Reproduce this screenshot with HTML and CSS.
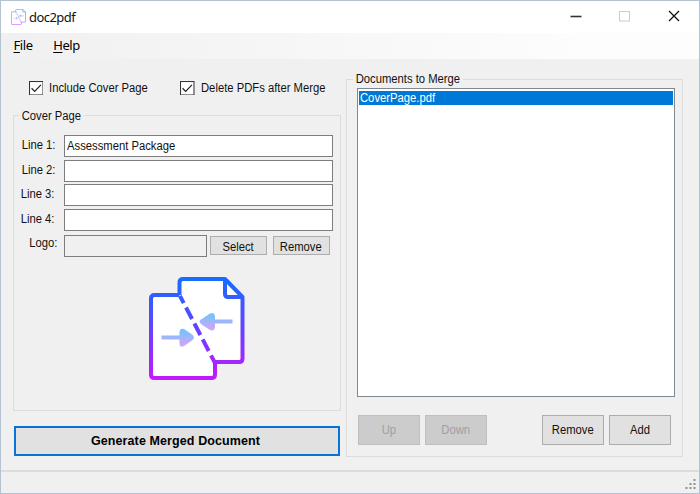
FILE: index.html
```
<!DOCTYPE html>
<html lang="en">
<head>
<meta charset="utf-8">
<title>doc2pdf</title>
<link rel="stylesheet" href="styles.css">
</head>
<body>
<div class="window">
  <header class="titlebar">
    <svg class="app-icon" viewBox="0 0 96 104">
      <use href="#pages"/>
    </svg>
    <span class="title">doc2pdf</span>
    <svg class="controls" width="110" height="14" viewBox="0 0 110 14">
      <path d="M0.5 6.500H11.500" stroke="#333" stroke-width="1.6"/>
      <rect x="49.500" y="1.500" width="10" height="9.500" fill="none" stroke="#ccc"/>
      <path d="M99 1L109 11M109 1L99 11" stroke="#111" stroke-width="1.3"/>
    </svg>
  </header>
  <nav class="menu"><span class="file"><u>F</u>ile</span><span class="help"><u>H</u>elp</span></nav>
  <main class="main">
    <section class="left">
      <div class="checks">
        <label class="check"><svg viewBox="0 0 14 14"><rect x=".5" y=".5" width="13" height="13" fill="#fff" stroke="#333"/><path d="M2.500 7L5.500 10L11.500 3.800" fill="none" stroke="#222" stroke-width="1.2"/></svg><span class="narrow">Include Cover Page</span></label>
        <label class="check"><svg viewBox="0 0 14 14"><rect x=".5" y=".5" width="13" height="13" fill="#fff" stroke="#333"/><path d="M2.500 7L5.500 10L11.500 3.800" fill="none" stroke="#222" stroke-width="1.2"/></svg><span class="narrow">Delete PDFs after Merge</span></label>
      </div>
      <div class="group cover">
        <div class="legend narrow">Cover Page</div>
        <div class="row"><span class="label narrow">Line 1:</span><div class="input"><span class="narrow">Assessment Package</span></div></div>
        <div class="row"><span class="label narrow">Line 2:</span><div class="input"></div></div>
        <div class="row"><span class="label l3 narrow">Line 3:</span><div class="input"></div></div>
        <div class="row"><span class="label l3 narrow">Line 4:</span><div class="input"></div></div>
        <div class="row logo-row"><span class="label logo narrow">Logo:</span><div class="input readonly"></div><div class="btn small"><span class="narrow">Select</span></div><div class="btn small second"><span class="narrow">Remove</span></div></div>
        <svg class="picture" width="96" height="104" viewBox="0 0 96 104">
          <defs>
            <linearGradient id="edge" gradientUnits="userSpaceOnUse" x1="0" y1="0" x2="0" y2="104"><stop offset="0" stop-color="#146eff"/><stop offset=".5" stop-color="#6541ff"/><stop offset="1" stop-color="#c817ff"/></linearGradient>
            <linearGradient id="a1" gradientUnits="userSpaceOnUse" x1="0" y1="37" x2="0" y2="54"><stop offset="0" stop-color="#70c5ff"/><stop offset="1" stop-color="#dba2f5"/></linearGradient>
            <linearGradient id="a2" gradientUnits="userSpaceOnUse" x1="0" y1="53" x2="0" y2="70"><stop offset="0" stop-color="#70c5ff"/><stop offset="1" stop-color="#dba2f5"/></linearGradient>
            <g id="pages">
              <path d="M30 19V5Q30 2 33 2H76L94 20V82Q94 85 91 85H66V98Q66 101 63 101H5Q2 101 2 98V21Q2 18 5 18H30Z" fill="#fff"/>
              <path d="M30.500 18V5.500Q30.500 2 34 2H76L93.500 20V81.500Q93.500 85 90 85H66V97.500Q66 101 62.500 101H5.500Q2 101 2 97.500V21.500Q2 18 5.500 18H30.500M76 3V17Q76 20 79 20H93" fill="none" stroke="url(#edge)" stroke-width="4" stroke-linejoin="round"/>
              <path d="M31 19L66 86" fill="none" stroke="url(#edge)" stroke-width="4" stroke-dasharray="13 5" stroke-dashoffset="5"/>
              <path d="M65 42.500H83.500V46.500H66V50Q65 55 61 53L52 47Q49 44.500 52 42.500L61 36.500Q65 34.500 66 39V42.500Z" fill="url(#a1)"/>
              <path d="M12.500 58.500H30.500V55Q31 50.500 35 52L43 57.500Q47 60.500 43 63.500L35 69Q31 71.500 30.500 66.500V62.500H12.500Z" fill="url(#a2)"/>
            </g>
          </defs>
          <use href="#pages"/>
        </svg>
      </div>
      <div class="generate"><span>Generate Merged Document</span></div>
    </section>
    <section class="group docs">
      <div class="legend narrow">Documents to Merge</div>
      <div class="list"><div class="item"><span class="narrow">CoverPage.pdf</span></div></div>
      <div class="actions">
        <div class="btn off"><span class="narrow">Up</span></div><div class="btn off"><span class="narrow">Down</span></div><div class="btn push"><span class="narrow">Remove</span></div><div class="btn"><span class="narrow">Add</span></div>
      </div>
    </section>
  </main>
  <footer class="status">
    <svg width="12" height="12" viewBox="0 0 12 12" fill="#909090"><path d="M8.500 0h2v2h-2zM4.500 4h2v2h-2zM8.500 4h2v2h-2zM.5 8h2v2h-2zM4.500 8h2v2h-2zM8.500 8h2v2h-2z"/></svg>
  </footer>
</div>
</body>
</html>
```
FILE: styles.css
```
* { box-sizing: border-box; }
body { margin: 0; font: 12.5px/16px "Liberation Sans", Arial, sans-serif; color: #111; }
.narrow { display: inline-block; transform: scaleX(.9); transform-origin: left; white-space: nowrap; }
.window { width: 700px; height: 494px; border: 1px solid #b4c3d1; background: #f0f0f0; display: flex; flex-direction: column; }
.titlebar { height: 32px; background: #fff; display: flex; align-items: center; padding: 0 19px 0 9.5px; }
.app-icon { width: 15px; height: 16px; opacity: .75; }
.title { font: 13px/16px "Noto Sans", sans-serif; margin-left: 3.5px; letter-spacing: -0.55px; }
.controls { margin-left: auto; }
.menu { height: 26px; background: linear-gradient(90deg, #f0f0f0, #fdfdfd 85%); padding: 3px 0 0 12.5px; display: flex; font: 13px/18px "Noto Sans", sans-serif; letter-spacing: -0.4px; color: #000; }
.menu u { text-underline-offset: 2px; }
.help { margin-left: 20.5px; }
.main { height: 411px; display: flex; gap: 5px; padding: 0 0 0 12px; }
.left { width: 328px; display: flex; flex-direction: column; }
.checks { height: 56px; display: flex; padding: 21px 0 0 15.5px; }
.check { display: flex; height: 16px; width: 151.5px; align-items: center; flex: none; white-space: nowrap; }
.check svg { width: 14.5px; height: 14.5px; margin-right: 6px; flex: none; }
.group { position: relative; border: 1px solid #dcdcdc; }
.legend { position: absolute; top: -8px; left: 5px; padding: 0 3px; background: #f0f0f0; }
.docs .legend { top: -9px; left: 6px; }
.cover { height: 296px; padding-top: 19px; }
.row { display: flex; height: 24.6px; }
.label { width: 41.5px; margin-right: 8.5px; text-align: right; padding-top: 2px; transform-origin: right; }
.label.l3 { width: 40.5px; margin-right: 9.5px; }
.label.logo { width: 43.5px; margin-right: 6.5px; padding-top: 0; }
.input { width: 268.5px; height: 22px; border: 1px solid #7d7d7d; background: #fff; padding: 2px 2px; }
.input.readonly { width: 143px; background: #f0f0f0; }
.logo-row { height: 25px; padding-top: 1.4px; }
.btn { width: 62px; height: 30px; border: 1px solid #adadad; background: #e1e1e1; display: flex; align-items: center; justify-content: center; }
.btn .narrow { transform-origin: 40% 50%; }
.btn.small { width: 57px; height: 19px; margin: 1px 0 0 3px; padding-top: 3px; }
.btn.small.second { margin-left: 6px; }
.picture { display: block; margin: 19px 0 0 134.5px; }
.generate { height: 30px; width: 326px; margin: 15px 0 0 1px; padding-right: 3px; border: 2px solid #0873d5; background: #e1e1e1; display: flex; align-items: center; justify-content: center; font-weight: bold; color: #000; letter-spacing: 0.1px; }
.docs { width: 337px; height: 378px; margin-top: 20px; padding: 8px 8px 0 10px; }
.list { width: 318px; height: 309px; border: 1px solid #7f8790; background: #fff; padding: 2px 1px; }
.item { height: 14px; background: #0078d7; color: #fff; padding-left: 1px; line-height: 15px; }
.actions { display: flex; gap: 5px; margin: 18px 3px 0 1px; }
.push { margin-left: auto; }
.off { background: #ccc; border-color: #bfbfbf; color: #a0a0a0; }
.status { flex: 1; border-top: 2px solid #dcdcdc; display: flex; justify-content: flex-end; align-items: flex-end; padding: 0 2px 2px; }
```
